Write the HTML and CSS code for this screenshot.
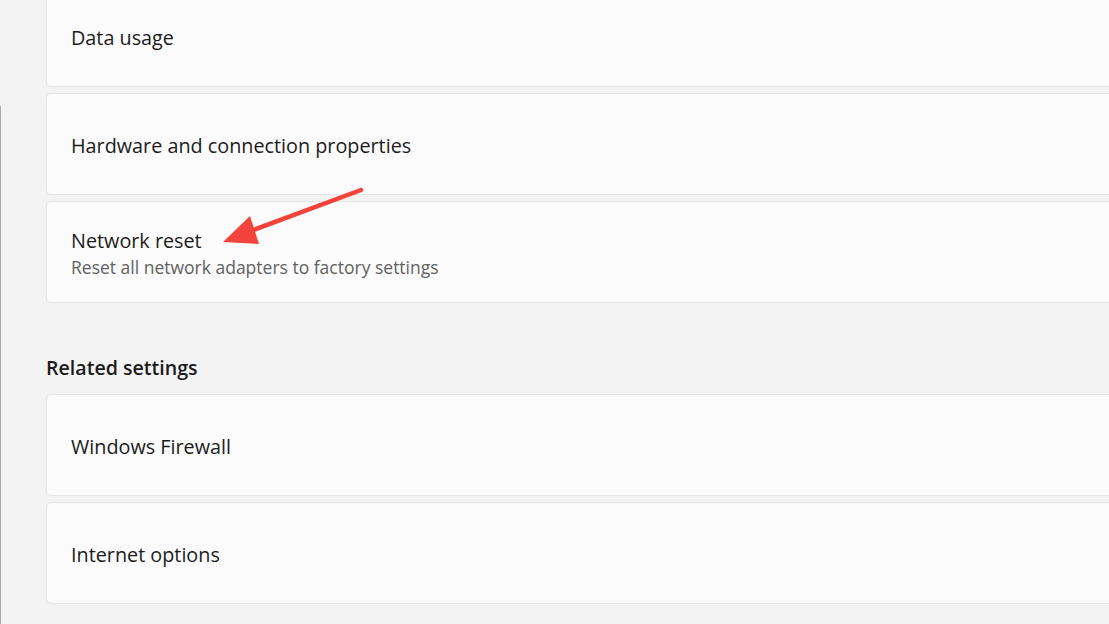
FILE: index.html
```html
<!DOCTYPE html>
<html>
	<head>
		<meta charset="UTF-8">
		<title>Network settings</title>
		<link rel="stylesheet" href="styles.css">
	</head>
	<body>
		<div class="edge"></div>
		<main class="content">
			<div class="card first">
				<div class="title">Data usage</div>
			</div>
			<div class="card">
				<div class="title">Hardware and connection properties</div>
			</div>
			<div class="card">
				<div class="title">Network reset</div>
				<div class="sub">Reset all network adapters to factory settings</div>
			</div>
			<h2 class="section">Related settings</h2>
			<div class="card">
				<div class="title">Windows Firewall</div>
			</div>
			<div class="card">
				<div class="title">Internet options</div>
			</div>
		</main>
		<svg class="arrow" width="1109" height="624" viewBox="0 0 1109 624">
			<line x1="361" y1="190" x2="248" y2="232" stroke="#f4433a" stroke-width="4.5" stroke-linecap="round"/>
			<polygon points="223,242 250,216 259,244" fill="#f4433a"/>
		</svg>
	</body>
</html>
```

FILE: styles.css
```css
html, body {
	margin: 0;
	height: 100%;
	overflow: hidden;
}
body {
	background: #f3f3f3;
	font-family: "Open Sans", "Noto Sans", sans-serif;
	color: #1b1b1b;
	position: relative;
}
.edge {
	position: absolute;
	left: 0;
	top: 106px;
	bottom: 0;
	width: 1px;
	background: #a9a9a9;
}
.content {
	padding-left: 46px;
	display: flex;
	flex-direction: column;
	gap: 6px;
}
.card {
	box-sizing: border-box;
	height: 102px;
	margin-right: -20px;
	padding: 3px 0 0 24px;
	background: #fbfbfb;
	border: 1px solid #e5e5e5;
	border-radius: 5px;
	display: flex;
	flex-direction: column;
	justify-content: center;
}
.card.first {
	margin-top: -15px;
}
.title {
	font-size: 19.8px;
	line-height: 26px;
}
.sub {
	font-size: 17.5px;
	line-height: 26px;
	color: #616161;
}
.section {
	margin: 45px 0 6px;
	font-size: 19.6px;
	line-height: 28px;
	font-weight: 600;
}
.arrow {
	position: absolute;
	left: 0;
	top: 0;
	pointer-events: none;
}
```
